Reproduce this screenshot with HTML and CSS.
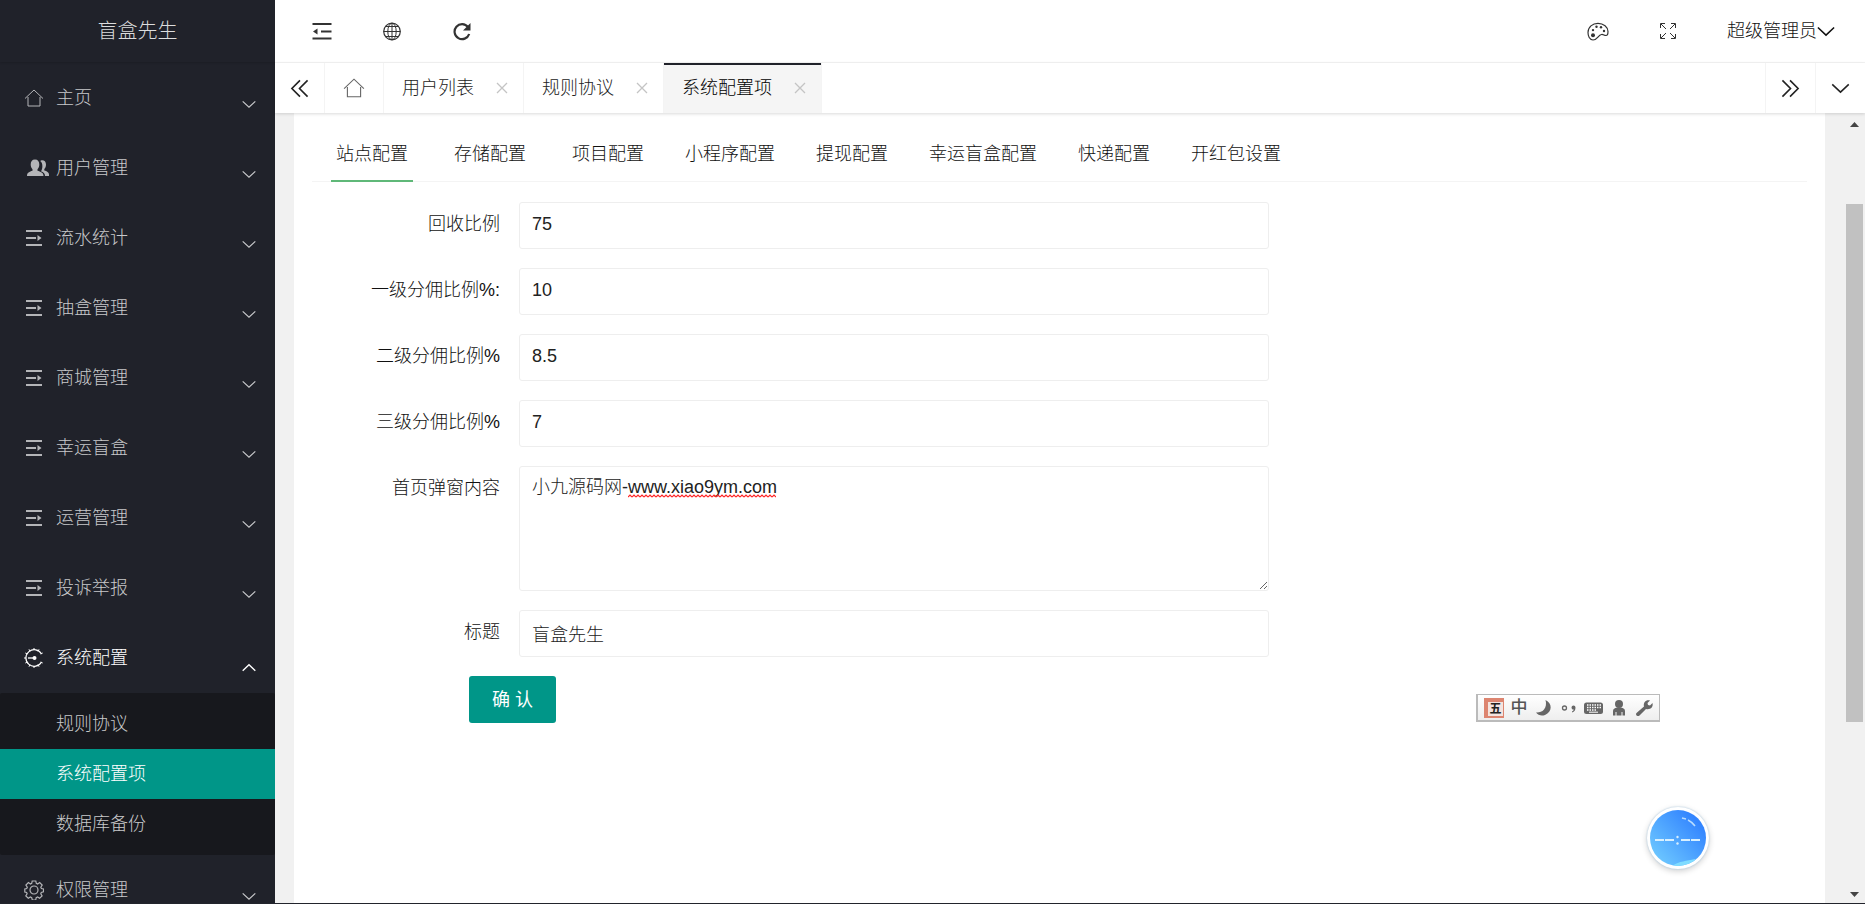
FILE: index.html
```html
<!DOCTYPE html>
<html lang="zh-CN">
<head>
<meta charset="utf-8">
<title>系统配置项</title>
<link rel="stylesheet" href="styles.css">
</head>
<body>
<svg class="sprite" aria-hidden="true">
  <symbol id="i-home" viewBox="0 0 20 20"><path d="M1 10.500 10 2l9 8.500M4 9v9h12V9" fill="none" stroke="currentColor"/></symbol>
  <symbol id="i-users" viewBox="0 0 24 20"><path d="M15 2.500c2.500-.8 5 .7 5 4 0 2-.8 3.600-1.700 4.500v1.500c2.500.8 4.700 1.600 4.700 4V18h-4c0-2.600-1.500-3.800-4-4.800 1.500-1.700 2.500-8-.8-10.300z" fill="currentColor"/><path d="M9 1.500c3 0 4.300 2 4.300 5 0 2-.7 3.700-1.800 4.700v1.500c3 .9 6 1.800 6 5.300H1c0-3.500 2.500-4.400 5.500-5.300v-1.500C5.400 10.200 4.700 8.500 4.700 6.500c0-3 1.300-5 4.300-5z" fill="currentColor"/></symbol>
  <symbol id="i-list" viewBox="0 0 20 20"><path d="M2 3h16M2 10h10M2 17h16" fill="none" stroke="currentColor" stroke-width="2"/><path d="M13.500 7l4 3-4 3z" fill="currentColor"/></symbol>
  <symbol id="i-config" viewBox="0 0 20 20"><g fill="none" stroke="currentColor"><path d="M17.500 6a8.300 8.300 0 1 0 0 8" stroke-width="1.200"/><path d="M4 10h6" stroke-width="1.300"/><path d="M10 0v2M5 1.300l1 2M1.300 5l2 1M0 10h2M1.300 15l2-1M5 18.700l1-2M10 20v-2M15 1.300l-1 2M18.700 5l-2 1M15 18.700l-1-2M18.700 15l-2-1"/></g><circle cx="10.500" cy="10" r="2" fill="currentColor"/></symbol>
  <symbol id="i-gear" viewBox="0 0 20 20"><g fill="none" stroke="currentColor" stroke-width="1.200"><path d="M8.200 1h3.600l.5 2.400 1.300.6 2.100-1.400 2.500 2.500-1.400 2.100.6 1.300 2.100.4v2.800l-2.200.7-.5 1.300 1.300 2.200-2.500 2.400-2-1.300-1.400.6-.5 2.400H8.300l-.6-2.400-1.300-.6-2.100 1.300-2.500-2.400 1.300-2.200-.5-1.300L.8 12V8.900l1.900-.4.6-1.300L1.900 5.100l2.500-2.500L6.500 4l1.200-.6z"/><circle cx="10" cy="10" r="4"/></g></symbol>
  <symbol id="i-down" viewBox="0 0 20 12"><path d="M1 1.500l9 8.500 9-8.500" fill="none" stroke="currentColor" stroke-width="1.700"/></symbol>
  <symbol id="i-up" viewBox="0 0 20 12"><path d="M1 10.500 10 2l9 8.500" fill="none" stroke="currentColor" stroke-width="2"/></symbol>
  <symbol id="i-left2" viewBox="0 0 20 20"><path d="M10.500 1.500 2 10l8.500 8.500M18.500 1.500 10 10l8.500 8.500" fill="none" stroke="currentColor" stroke-width="1.700"/></symbol>
  <symbol id="i-right2" viewBox="0 0 20 20"><path d="M9.500 1.500 18 10l-8.500 8.500M1.500 1.500 10 10l-8.500 8.500" fill="none" stroke="currentColor" stroke-width="1.700"/></symbol>
  <symbol id="i-close" viewBox="0 0 12 12"><path d="M1 1l10 10M11 1 1 11" fill="none" stroke="currentColor" stroke-width="1.300"/></symbol>
  <symbol id="i-fold" viewBox="0 0 20 20"><path d="M.5 3h19M9 10.500h10.500M.5 17.500h19" fill="none" stroke="currentColor" stroke-width="2"/><path d="M5.500 7.500v6L1 10.500z" fill="currentColor"/></symbol>
  <symbol id="i-globe" viewBox="0 0 20 20"><g fill="none" stroke="currentColor"><circle cx="10" cy="10.500" r="8.300" stroke-width="1.200"/><ellipse cx="10" cy="10.500" rx="4.200" ry="8.300"/><path d="M10 2.200v16.600M1.700 10.500h16.600M3.500 5.500h13M3.500 15.500h13"/></g></symbol>
  <symbol id="i-refresh" viewBox="0 0 20 20"><path d="M16 6A7.500 7.500 0 1 0 17.200 13" fill="none" stroke="currentColor" stroke-width="2.200"/><path d="M18.500 2v7.500H11z" fill="currentColor"/></symbol>
  <symbol id="i-palette" viewBox="0 0 22 20"><path d="M6 19C2.500 19 1 15 1 11.500 1 6 5.500 2.300 11 2.300S21 6.300 21 10.500c0 2.500-.5 4-2 4-2 0-2.500-1.300-4.500-1C11 14 10.500 19 6 19z" fill="none" stroke="currentColor" stroke-width="1.200"/><g fill="currentColor"><circle cx="6" cy="14.300" r="2"/><circle cx="6" cy="9.100" r="1.200"/><circle cx="9.500" cy="5.800" r="1.200"/><circle cx="14" cy="6.300" r="1.200"/><circle cx="17" cy="10" r="1.200"/></g></symbol>
  <symbol id="i-full" viewBox="0 0 18 18"><path d="M1.500 6V1.500H6M2 2l5 5M12 1.500h4.500V6M16 2l-5 5M1.500 12v4.500H6M2 16l5-5M12 16.500h4.500V12M16 16l-5-5" fill="none" stroke="currentColor"/></symbol>
</svg>

<div class="app">
  <aside class="side">
    <div class="logo">盲盒先生</div>
    <nav class="menu">
      <a class="item" href="#"><svg class="ico"><use href="#i-home"/></svg>主页<svg class="arrow"><use href="#i-down"/></svg></a>
      <a class="item" href="#"><svg class="ico ico-wide"><use href="#i-users"/></svg>用户管理<svg class="arrow"><use href="#i-down"/></svg></a>
      <a class="item" href="#"><svg class="ico"><use href="#i-list"/></svg>流水统计<svg class="arrow"><use href="#i-down"/></svg></a>
      <a class="item" href="#"><svg class="ico"><use href="#i-list"/></svg>抽盒管理<svg class="arrow"><use href="#i-down"/></svg></a>
      <a class="item" href="#"><svg class="ico"><use href="#i-list"/></svg>商城管理<svg class="arrow"><use href="#i-down"/></svg></a>
      <a class="item" href="#"><svg class="ico"><use href="#i-list"/></svg>幸运盲盒<svg class="arrow"><use href="#i-down"/></svg></a>
      <a class="item" href="#"><svg class="ico"><use href="#i-list"/></svg>运营管理<svg class="arrow"><use href="#i-down"/></svg></a>
      <a class="item" href="#"><svg class="ico"><use href="#i-list"/></svg>投诉举报<svg class="arrow"><use href="#i-down"/></svg></a>
      <a class="item open" href="#"><svg class="ico"><use href="#i-config"/></svg>系统配置<svg class="arrow"><use href="#i-up"/></svg></a>
      <div class="submenu">
        <a href="#">规则协议</a>
        <a class="current" href="#">系统配置项</a>
        <a href="#">数据库备份</a>
      </div>
      <a class="item" href="#"><svg class="ico"><use href="#i-gear"/></svg>权限管理<svg class="arrow"><use href="#i-down"/></svg></a>
    </nav>
  </aside>

  <div class="main">
    <header class="topbar">
      <button class="tool" aria-label="收起菜单"><svg><use href="#i-fold"/></svg></button>
      <button class="tool" aria-label="网站"><svg><use href="#i-globe"/></svg></button>
      <button class="tool" aria-label="刷新"><svg><use href="#i-refresh"/></svg></button>
      <span class="space"></span>
      <button class="tool" aria-label="主题"><svg class="palette"><use href="#i-palette"/></svg></button>
      <button class="tool" aria-label="全屏"><svg class="full"><use href="#i-full"/></svg></button>
      <button class="account">超级管理员<svg><use href="#i-down"/></svg></button>
    </header>

    <div class="pages">
      <button class="step" aria-label="向左"><svg class="double"><use href="#i-left2"/></svg></button>
      <a class="page home" href="#" aria-label="主页"><svg><use href="#i-home"/></svg></a>
      <div class="page"><a href="#">用户列表</a><button aria-label="关闭"><svg><use href="#i-close"/></svg></button></div>
      <div class="page"><a href="#">规则协议</a><button aria-label="关闭"><svg><use href="#i-close"/></svg></button></div>
      <div class="page active"><a href="#">系统配置项</a><button aria-label="关闭"><svg><use href="#i-close"/></svg></button></div>
      <span class="space"></span>
      <button class="step end" aria-label="向右"><svg class="double"><use href="#i-right2"/></svg></button>
      <button class="step end" aria-label="更多"><svg class="more"><use href="#i-down"/></svg></button>
    </div>

    <div class="body">
      <main class="card">
        <div class="tabs">
          <a class="tab selected" href="#">站点配置</a>
          <a class="tab" href="#">存储配置</a>
          <a class="tab" href="#">项目配置</a>
          <a class="tab" href="#">小程序配置</a>
          <a class="tab" href="#">提现配置</a>
          <a class="tab" href="#">幸运盲盒配置</a>
          <a class="tab" href="#">快递配置</a>
          <a class="tab" href="#">开红包设置</a>
        </div>
        <form class="form">
          <div class="row"><label for="recycle">回收比例</label><input id="recycle" type="text" value="75"></div>
          <div class="row"><label for="level1">一级分佣比例%:</label><input id="level1" type="text" value="10"></div>
          <div class="row"><label for="level2">二级分佣比例%</label><input id="level2" type="text" value="8.5"></div>
          <div class="row"><label for="level3">三级分佣比例%</label><input id="level3" type="text" value="7"></div>
          <div class="row"><label for="popup">首页弹窗内容</label>
            <div class="area"><textarea id="popup" spellcheck="false">小九源码网-www.xiao9ym.com</textarea>
              <svg class="squiggle" aria-hidden="true"><defs><pattern id="wave" width="4" height="4" patternUnits="userSpaceOnUse"><path d="M0 3l2-2 2 2" fill="none" stroke="#f22" stroke-width="1.200"/></pattern></defs><rect width="100%" height="4" fill="url(#wave)"/></svg>
            </div>
          </div>
          <div class="row"><label for="title">标题</label><input id="title" type="text" value="盲盒先生"></div>
          <button class="submit" type="button">确 认</button>
        </form>
      </main>
      <div class="scroll" aria-hidden="true">
        <svg viewBox="0 0 17 17"><path d="M4 11l4.500-5 4.500 5z" fill="#444"/></svg>
        <div class="track"><div class="thumb"></div></div>
        <svg viewBox="0 0 17 17"><path d="M4 6l4.500 5L13 6z" fill="#444"/></svg>
      </div>
    </div>
  </div>
</div>

<div class="ime">
  <span class="wubi">五</span>
  <span class="zh">中</span>
  <svg viewBox="0 0 20 20"><path d="M11.500 2c7 3 7 12-.5 15-3.500 1.300-7 .3-9-2.500 3 .2 6-.5 8-3s2.500-6 1.500-9.500z"/></svg>
  <svg viewBox="0 0 20 20"><circle cx="5.500" cy="10" r="2" fill="none" stroke="#666" stroke-width="1.300"/><path d="M12.500 9.500a2 2 0 0 1 4 0c0 2.500-1 4.300-3.500 5v-1c1.200-.5 1.700-1.200 1.700-2-1.200.2-2.200-.7-2.200-2z"/></svg>
  <svg viewBox="0 0 20 20"><rect x="0" y="4.500" width="19" height="11.500" rx="2.500"/><path d="M3 7h14M3 9.500h14M3 12h10" stroke="#fff" stroke-width="1.400" stroke-dasharray="1.500 1"/><path d="M5 14.200h9" stroke="#fff"/></svg>
  <svg viewBox="0 0 20 20"><circle cx="10" cy="6" r="4"/><path d="M4 17.500v-4c0-3 2-4 6-4s6 1 6 4v4h-2.500V14h-1v3.500h-5V14h-1v3.500z"/></svg>
  <svg viewBox="0 0 20 20"><path d="M2.500 15 10 8.500C9 4.500 12 1.500 16 2.500L13.500 5 14 7l2 .5L18.500 5c1 4-2 7-6.500 6L5.500 17.500c-2 1.500-4.500-.7-3-2.500z"/></svg>
</div>

<div class="ball">
  <svg viewBox="0 0 56 56">
    <defs>
      <linearGradient id="sky" x1="0.150" y1="0.850" x2="0.850" y2="0.200"><stop offset="0" stop-color="#6ac4ff"/><stop offset="1" stop-color="#3385ff"/></linearGradient>
      <clipPath id="disc"><circle cx="28" cy="28" r="28"/></clipPath>
    </defs>
    <circle cx="28" cy="28" r="28" fill="url(#sky)"/>
    <path d="M22 56c8-5 14-5 23-7v9H22z" fill="#7fdcff" clip-path="url(#disc)"/>
    <path d="M32 8l4 1M38 10q4 2 7 6" stroke="#b8dcff" stroke-width="1.500" fill="none"/>
    <path d="M5 30h9M15 30h9M31 30h9M41 30h9" stroke="#d8f0ff" stroke-width="2"/>
    <circle cx="27.500" cy="27" r="1.200" fill="#d8f0ff"/><circle cx="27.500" cy="33.500" r="1.200" fill="#d8f0ff"/>
  </svg>
</div>
</body>
</html>
```

FILE: styles.css
```css
* { box-sizing: border-box; }

body {
  margin: 0;
  color: #222;
  font: 300 18px/24px "Liberation Sans", "Noto Sans CJK SC", sans-serif;
}

a { color: inherit; text-decoration: none; }

button {
  padding: 0;
  border: 0;
  background: none;
  color: inherit;
  font: inherit;
}

svg { display: block; flex: none; }
.sprite { position: absolute; width: 0; height: 0; }
.space { flex: 1; }

.app {
  display: flex;
  height: 100vh;
  overflow: hidden;
  border-bottom: 1px solid #22242c;
}

/* Sidebar */
.side {
  flex: none;
  width: 275px;
  overflow: hidden;
  background: #20222a;
  color: #c8c9cb;
}

.logo {
  height: 62px;
  margin-bottom: 1px;
  box-shadow: 0 1px 2px rgba(0, 0, 0, .15);
  color: #dcddde;
  font-size: 20px;
  line-height: 62px;
  text-align: center;
}

.item {
  display: flex;
  align-items: center;
  height: 70px;
  padding: 0 19px 0 24px;
}

.item.open { color: #fff; }
.ico { width: 20px; height: 20px; margin-right: 12px; color: #b4b5b8; }
.open .ico { color: #fff; }
.ico-wide { width: 24px; margin-left: 2px; margin-right: 6px; }
.arrow { width: 14px; height: 9px; margin: 12px 0 0 auto; }
.open .arrow { margin-top: 18px; }

.submenu { padding: 6px 0; border-radius: 2px; background: #17181d; }
.submenu a { display: block; padding-left: 56px; line-height: 50px; }
.submenu .current { background: #009688; color: #fff; }

/* Header */
.main { display: flex; flex: 1; flex-direction: column; min-width: 0; }

.topbar {
  display: flex;
  flex: none;
  align-items: center;
  height: 63px;
  padding: 0 30px 0 12px;
  border-bottom: 1px solid #f4f4f4;
  color: #333;
}

.tool { display: flex; justify-content: center; width: 70px; }
.tool svg { width: 20px; height: 20px; }
.tool .palette { width: 22px; }
.tool .full { width: 18px; height: 18px; }
.account { display: flex; align-items: center; margin-left: 24px; color: #111; }
.account svg { width: 18px; height: 11px; }

/* Open pages */
.pages {
  position: relative;
  z-index: 1;
  display: flex;
  flex: none;
  height: 50px;
  background: #fff;
  box-shadow: 0 1px 3px rgba(0, 0, 0, .15);
}

.step, .page {
  display: flex;
  align-items: center;
  border-right: 1px solid #f4f4f4;
}

.step { justify-content: center; width: 50px; }
.step.end { border-right: 0; border-left: 1px solid #f4f4f4; }
.double { width: 19px; height: 19px; }
.more { width: 19px; height: 11px; }
.page { gap: 22px; padding: 0 15px 0 18px; }
.page button { color: #c4c4c4; }
.page button svg { width: 12px; height: 12px; }
.home { padding: 0 18px; color: #666; }
.home svg { width: 22px; height: 22px; }
.active {
  background: #f5f5f5;
  box-shadow: inset 0 2px #20222a;
  color: #000;
}

/* Content */
.body {
  display: flex;
  flex: 1;
  min-height: 0;
  padding: 0 2px 0 19px;
  background: #f1f1f1;
}

.card {
  flex: 1;
  min-width: 0;
  padding: 18px 18px 0;
  background: #fff;
  color: #111;
}

.tabs {
  display: flex;
  gap: 36px;
  height: 51px;
  padding-left: 19px;
  border-bottom: 1px solid #f4f4f4;
}

.tab {
  min-width: 82px;
  height: 51px;
  line-height: 46px;
  text-align: center;
  white-space: nowrap;
}

.selected { border-bottom: 2px solid #5fb878; }

.form { width: 64%; padding-top: 20px; }
.row { display: flex; gap: 19px; margin-bottom: 19px; }
.row label { flex: none; width: 188px; line-height: 44px; text-align: right; }

.row input, .row textarea {
  flex: 1;
  min-width: 0;
  height: 47px;
  margin: 0;
  padding: 0 12px 2px;
  border: 1px solid #eee;
  border-radius: 3px;
  background: #fff;
  color: #222;
  font: inherit;
}

.area { position: relative; flex: 1; }
.row textarea { display: block; width: 100%; height: 125px; padding: 8px 12px; }
.squiggle { position: absolute; top: 28px; left: 109px; width: 148px; height: 4px; }

.submit {
  height: 47px;
  margin-left: 157px;
  padding: 0 23px;
  border-radius: 3px;
  background: #009688;
  color: #fff;
  font-weight: 400;
}

.scroll {
  display: flex;
  flex: none;
  flex-direction: column;
  width: 17px;
  margin-left: 21px;
  padding-top: 3px;
}

.scroll svg { width: 17px; height: 17px; }
.track { flex: 1; padding-top: 71px; }
.thumb { height: 76%; background: #c1c1c1; }

/* Floating tools */
.ime {
  position: fixed;
  right: 205px;
  bottom: 182px;
  display: flex;
  align-items: center;
  gap: 5px;
  height: 28px;
  padding: 0 5px 0 6px;
  border: 2px solid #bbb;
  border-width: 1px 1px 2px 2px;
  background: linear-gradient(#fff, #eee);
}

.ime svg { width: 20px; height: 20px; fill: #666; }
.ime span { width: 20px; text-align: center; }

.ime .wubi {
  height: 20px;
  border: 2px solid #dd8570;
  border-width: 4px 1px 2px 4px;
  background: #f3e4e0;
  color: #222;
  font-size: 12px;
  font-weight: 700;
  line-height: 14px;
}

.ime .zh { color: #555; font-size: 17px; font-weight: 500; }

.ball {
  position: fixed;
  right: 156px;
  bottom: 35px;
  padding: 3px;
  border-radius: 50%;
  background: #fff;
  box-shadow: 0 0 2px #a8c8e0, 0 2px 6px rgba(0, 0, 0, .2);
}

.ball svg { width: 56px; height: 56px; }
```
